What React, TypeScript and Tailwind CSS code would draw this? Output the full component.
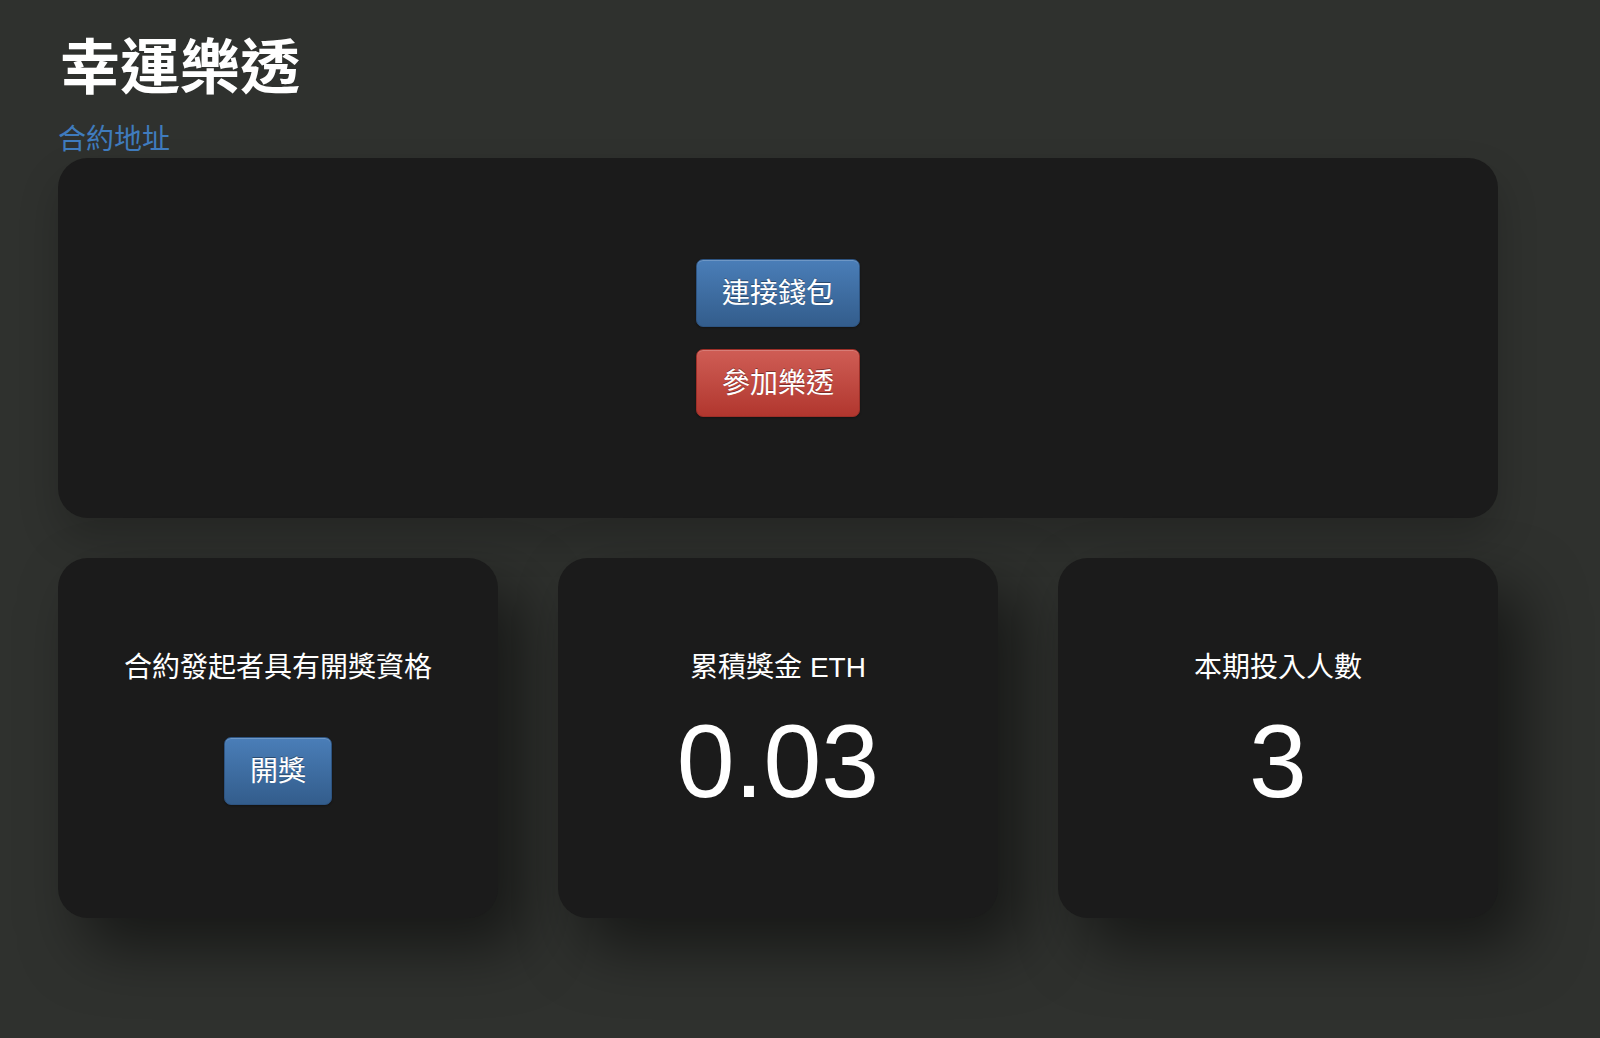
const font = "font-['Liberation_Sans','Noto_Sans_CJK_TC',sans-serif]";

const Btn = ({ color, children }: { color: "blue" | "red"; children: React.ReactNode }) => (
  <button
    className={
      "px-[25px] pt-[13px] pb-[11px] text-[28px] leading-[42px] text-white rounded-[7px] border shadow-[inset_0_1px_0_rgba(255,255,255,0.2),0_1px_2px_rgba(0,0,0,0.3)] [text-shadow:0_-1px_0_rgba(0,0,0,0.35)] " +
      (color === "blue"
        ? "bg-gradient-to-b from-[#4a7eb8] to-[#335d8c] border-[#2d5380]"
        : "bg-gradient-to-b from-[#cf5d55] to-[#b1362e] border-[#9c2f28]")
    }
  >
    {children}
  </button>
);

const Card = ({ children }: { children: React.ReactNode }) => (
  <div className="h-[360px] rounded-[30px] bg-[#1b1b1b] shadow-[25px_30px_60px_rgba(0,0,0,0.5)] flex flex-col items-center pt-[89px]">
    {children}
  </div>
);

export default function App() {
  return (
    <div className={"min-h-[1038px] bg-[#2f312e] px-[58px] pt-[33px] text-white " + font}>
      <div className="w-[1440px]">
        <h1 className="text-[60px] leading-[72px] font-semibold pl-[2px]">幸運樂透</h1>
        <a className="block mt-[17px] text-[28px] leading-[36px] text-[#3f7bbd]">合約地址</a>
        <div className="h-[360px] rounded-[30px] bg-[#1b1b1b] shadow-[0_20px_40px_rgba(0,0,0,0.2)] flex flex-col items-center justify-center gap-[22px]">
          <Btn color="blue">連接錢包</Btn>
          <Btn color="red">參加樂透</Btn>
        </div>
        <div className="mt-[40px] grid grid-cols-3 gap-[60px]">
          <Card>
            <p className="text-[28px] leading-[42px]">合約發起者具有開獎資格</p>
            <div className="mt-[48px]">
              <Btn color="blue">開獎</Btn>
            </div>
          </Card>
          <Card>
            <p className="text-[28px] leading-[42px]">累積獎金 ETH</p>
            <p className="mt-[20px] text-[104px] leading-[104px]">0.03</p>
          </Card>
          <Card>
            <p className="text-[28px] leading-[42px]">本期投入人數</p>
            <p className="mt-[20px] text-[104px] leading-[104px]">3</p>
          </Card>
        </div>
      </div>
    </div>
  );
}
